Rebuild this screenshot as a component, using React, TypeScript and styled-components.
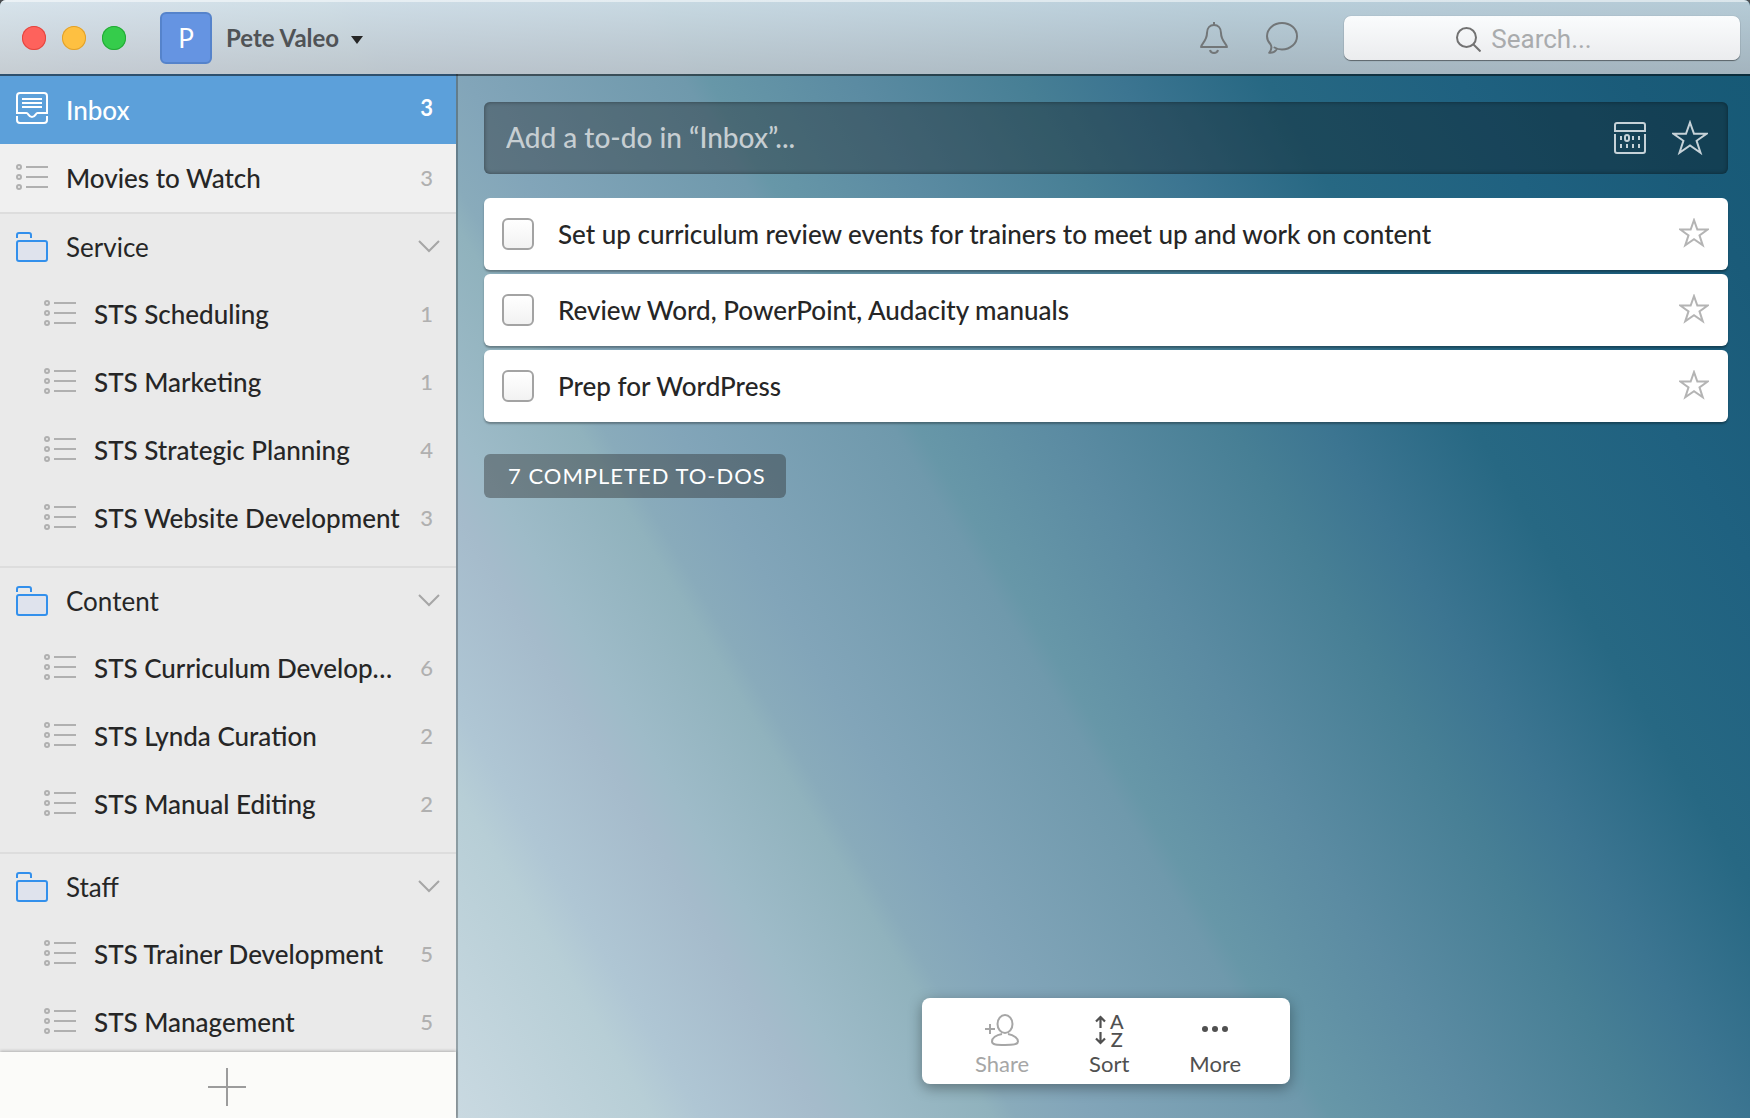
import React from "react";
import styled, { createGlobalStyle } from "styled-components";

const GlobalStyle = createGlobalStyle`
  *, *::before, *::after { box-sizing: border-box; }
  html { background: #4a4d50; }
  body { margin: 0; font-family: Lato, "Open Sans", sans-serif; color: #262626; }
  button, input { font: inherit; color: inherit; }
  button { margin: 0; padding: 0; border: 0; background: none; cursor: pointer; }
  svg { display: block; flex: none; }
  ul { margin: 0; padding: 0; list-style: none; }
`;

const Window = styled.div`
  display: flex;
  flex-direction: column;
  height: 100vh;
  overflow: hidden;
  border-radius: 6px 6px 0 0;
  background: linear-gradient(
    59deg,
    #cddbe3 0%,
    #c9d9e1 19%,
    #b7ced6 27%,
    #afc6d4 29%,
    #a5bbcb 34%,
    #9ebbc8 36%,
    #90b2bd 41%,
    #89abbb 42%,
    #82a5b9 45%,
    #6f99ac 54%,
    #6797a8 55%,
    #5b8ba2 61%,
    #477f95 68%,
    #3c7591 72%,
    #276883 78%,
    #1f6180 86%,
    #1a5b79 93%,
    #155975 100%
  );
`;

const Header = styled.header`
  position: relative;
  z-index: 1;
  flex: none;
  display: flex;
  align-items: center;
  height: 74px;
  padding: 2px 10px 0 22px;
  background: linear-gradient(rgba(225, 235, 242, 0.79), rgba(201, 204, 209, 0.79));
  box-shadow: 0 2px 0 rgba(0, 0, 0, 0.5), inset 0 2px 0 rgba(255, 255, 255, 0.5);
`;

const Lights = styled.div`
  display: flex;
  gap: 16px;
`;

const Light = styled.button<{ $fill: string; $edge: string }>`
  width: 24px;
  height: 24px;
  border-radius: 50%;
  background: ${(p) => p.$fill};
  box-shadow: inset 0 0 0 1px ${(p) => p.$edge};
`;

const Account = styled.button`
  display: flex;
  align-items: center;
  margin-left: 34px;
  font-size: 24px;
  font-weight: 700;
  line-height: 32px;
  color: #505356;
`;

const Avatar = styled.span`
  width: 52px;
  height: 52px;
  margin-right: 14px;
  border: 2px solid #5583cb;
  border-radius: 6px;
  background: #6594e2;
  color: #fff;
  font-size: 26px;
  font-weight: 400;
  line-height: 48px;
  text-align: center;
`;

const Caret = styled.span`
  margin: 4px 0 0 12px;
  border: 6px solid transparent;
  border-top: 8px solid #262626;
  border-bottom: 0;
`;

const HeaderTools = styled.div`
  display: flex;
  gap: 38px;
  margin: 0 46px 0 auto;
  color: #727678;
`;

const SearchBox = styled.label`
  display: flex;
  align-items: center;
  justify-content: center;
  gap: 10px;
  width: 396px;
  height: 44px;
  padding: 2px 36px 0 0;
  border-radius: 7px;
  background: linear-gradient(#fafcfd, #ebecee);
  box-shadow: 0 1px 1px rgba(0, 0, 0, 0.45), 0 0 1px rgba(0, 0, 0, 0.3);
  color: #727272;
`;

const SearchInput = styled.input`
  field-sizing: content;
  padding: 0;
  border: 0;
  outline: 0;
  background: none;
  font-family: Roboto, "Liberation Sans", sans-serif;
  font-size: 26px;
  line-height: 32px;
  &::placeholder { color: #a9abad; opacity: 1; }
`;

const Body = styled.div`
  flex: 1;
  display: flex;
  min-height: 0;
`;

const Sidebar = styled.nav`
  flex: none;
  display: flex;
  flex-direction: column;
  width: 458px;
  border-right: 2px solid rgba(0, 0, 0, 0.25);
  background: #eaeaea;
  background-clip: padding-box;
`;

const Lists = styled.div`
  flex: 1;
  min-height: 0;
  overflow: hidden;
  border-top: 2px solid #5ca0da;
`;

const Group = styled.ul`
  padding-bottom: 14px;
  box-shadow: inset 0 2px 0 #dddddd;
`;

const Row = styled.button<{ $tone?: "active" | "plain"; $nested?: boolean; $light?: boolean }>`
  display: flex;
  align-items: center;
  gap: 18px;
  width: 100%;
  height: 68px;
  padding: 0 23px 0 ${(p) => (p.$nested ? 44 : 16)}px;
  font-size: 26px;
  font-weight: ${(p) => (p.$light ? 400 : 500)};
  line-height: 32px;
  text-align: left;
  color: ${(p) => (p.$tone === "active" ? "#fff" : "#262626")};
  background: ${(p) => (p.$tone === "active" ? "#5ca0da" : p.$tone === "plain" ? "#f0f0f0" : "none")};
`;

const FolderRow = styled(Row)`
  padding-top: 2px;
  padding-right: 16px;
`;

const RowLabel = styled.span`
  flex: 1;
  min-width: 0;
  overflow: hidden;
  text-overflow: ellipsis;
  white-space: nowrap;
`;

const Raised = styled.span`
  padding-bottom: 4px;
`;

const Count = styled.span<{ $active?: boolean }>`
  padding-bottom: ${(p) => (p.$active ? 4 : 0)}px;
  font-size: 22px;
  font-weight: ${(p) => (p.$active ? 700 : 500)};
  color: ${(p) => (p.$active ? "#fff" : "#b0b0b0")};
`;

const AddList = styled.button`
  flex: none;
  display: flex;
  align-items: center;
  justify-content: center;
  height: 66px;
  padding: 4px 2px 0 0;
  background: #fbfbf9;
  box-shadow: 0 -1px 3px rgba(0, 0, 0, 0.25);
  color: #9c9c9c;
`;

const Main = styled.main`
  flex: 1;
  display: flex;
  flex-direction: column;
  min-width: 0;
  padding: 28px 22px 34px 26px;
`;

const AddTask = styled.form`
  display: flex;
  align-items: center;
  height: 72px;
  padding: 0 20px 0 22px;
  margin-bottom: 24px;
  border-radius: 6px;
  background: rgba(10, 10, 10, 0.32);
  box-shadow: inset 0 0 4px rgba(0, 0, 0, 0.4);
  color: #c6d2d8;
`;

const AddInput = styled.input`
  flex: 1;
  min-width: 0;
  padding: 0 0 2px;
  border: 0;
  outline: 0;
  background: none;
  font-size: 28px;
  font-weight: 500;
  line-height: 34px;
  &::placeholder { color: #c6ced2; opacity: 1; }
`;

const IconButton = styled.button`
  margin-left: 26px;
`;

const Tasks = styled.ul`
  display: flex;
  flex-direction: column;
  gap: 4px;
`;

const Task = styled.li`
  display: flex;
  align-items: center;
  height: 72px;
  padding: 0 19px 0 18px;
  border-radius: 6px;
  background: #fff;
  box-shadow: 0 2px 2px rgba(0, 0, 0, 0.3);
  color: #b4b4b4;
`;

const TaskLabel = styled.label`
  flex: 1;
  display: flex;
  align-items: center;
  gap: 24px;
  font-size: 26px;
  font-weight: 500;
  line-height: 32px;
  color: #262626;
`;

const TaskStar = styled.button`
  padding-bottom: 2px;
`;

const Check = styled.input`
  appearance: none;
  width: 32px;
  height: 32px;
  margin: 0;
  border: 2px solid #a3a3a3;
  border-radius: 6px;
  background: linear-gradient(#fff, #f2f2f2);
`;

const Completed = styled.button`
  align-self: flex-start;
  height: 44px;
  margin-top: 32px;
  padding: 0 20px 0 24px;
  border-radius: 6px;
  background: rgba(40, 40, 40, 0.4);
  color: #fff;
  font-size: 22px;
  line-height: 44px;
  letter-spacing: 1px;
  text-transform: uppercase;
`;

const Toolbar = styled.div`
  display: flex;
  justify-content: center;
  gap: 60px;
  align-self: center;
  width: 368px;
  height: 86px;
  margin-top: auto;
  padding: 16px 0 0 4px;
  border-radius: 8px;
  background: #fff;
  box-shadow: 0 4px 14px rgba(0, 0, 0, 0.35);
`;

const Tool = styled.button<{ $muted?: boolean }>`
  display: flex;
  flex-direction: column;
  align-items: center;
  gap: 4px;
  align-self: flex-start;
  font-size: 22px;
  line-height: 28px;
  color: ${(p) => (p.$muted ? "#a6a6a6" : "#505050")};
`;

const SortMark = styled.span`
  display: flex;
  align-items: center;
  gap: 4px;
  height: 32px;
`;

const SortLetters = styled.span`
  display: flex;
  flex-direction: column;
  align-items: center;
  font-size: 20px;
  font-weight: 500;
  line-height: 18px;
`;

const stroke = { fill: "none", stroke: "currentColor", strokeWidth: 2 } as const;

const InboxIcon = () => (
  <svg width="32" height="32" viewBox="0 0 32 32" {...stroke}>
    <path d="M1 21V4a3 3 0 0 1 3-3h24a3 3 0 0 1 3 3v17H21.500c-2 0-2 4-5.500 4s-3.500-4-5.500-4H1z" />
    <path d="M1 24V28a3 3 0 0 0 3 3h24a3 3 0 0 0 3-3v-4M6 7h20M6 11h20M6 15h20" />
  </svg>
);

const ListIcon = () => (
  <svg width="32" height="28" viewBox="0 0 32 28" {...stroke} stroke="#b0b0b0">
    {[3, 13, 23].map((y) => (
      <g key={y}>
        <circle cx="3" cy={y} r="2" />
        <path d={`M10 ${y}h22`} />
      </g>
    ))}
  </svg>
);

const FolderIcon = () => (
  <svg width="32" height="30" viewBox="0 0 32 30" {...stroke} stroke="#3390ec">
    <path d="M1 6V3a2 2 0 0 1 2-2h10a2 2 0 0 1 2 2v3" />
    <rect x="1" y="9" width="30" height="20" rx="2" fill="#dfe3ed" />
  </svg>
);

const ChevronIcon = () => (
  <svg width="22" height="14" viewBox="0 0 22 14" {...stroke} stroke="#a6a6a6">
    <path d="M1 1l10 10L21 1" />
  </svg>
);

const PlusIcon = () => (
  <svg width="38" height="38" viewBox="0 0 38 38" {...stroke}>
    <path d="M19 0v38M0 19h38" />
  </svg>
);

const BellIcon = () => (
  <svg width="28" height="32" viewBox="0 0 28 32" {...stroke}>
    <path d="M1 25c0-3 6-6 6-14 0-5 3-8 7-8s7 3 7 8c0 8 6 11 6 14z" strokeLinejoin="round" />
    <path d="M14 0v3M10 28c1 4 7 4 8 0" />
  </svg>
);

const BubbleIcon = () => (
  <svg width="32" height="32" viewBox="0 0 32 32" {...stroke}>
    <path
      strokeLinejoin="round"
      strokeLinecap="round"
      d="M8.500 25.500C11 27 13.500 27.500 16 27.500 24.500 27.500 31 21.500 31 14.200S24.500 1 16 1 1 7 1 14.200c0 3 1.200 5.600 3.500 8 1.300 2.300.8 6-1.300 8.600 3 .3 5.300-.6 7-2.800"
    />
  </svg>
);

const SearchIcon = () => (
  <svg width="25" height="25" viewBox="0 0 25 25" {...stroke}>
    <circle cx="10.500" cy="10.500" r="9.500" />
    <path d="M17 17l7.500 7.500" />
  </svg>
);

const CalendarIcon = () => (
  <svg width="32" height="32" viewBox="0 0 32 32" {...stroke}>
    <path d="M1 9V3a2 2 0 0 1 2-2h26a2 2 0 0 1 2 2v6z" />
    <path d="M1 12v17a2 2 0 0 0 2 2h26a2 2 0 0 0 2-2V12" />
    <rect x="11" y="13" width="4" height="6" rx="2" />
    <path d="M7 14v4M19 14v4M25 14v4M7 22v4M13 22v4M19 22v4M25 22v4" />
  </svg>
);

const StarIcon = ({ size }: { size: number }) => (
  <svg width={size} height={size} viewBox="0 0 36 36" {...stroke} strokeWidth={size > 32 ? 2 : 2.400}>
    <path d="M18 2.500l4 11.300h12.500l-9.900 7 3.900 12L18 25.500l-10.500 7.300 3.900-12-9.900-7H14z" />
  </svg>
);

const ShareIcon = () => (
  <svg width="34" height="32" viewBox="0 0 34 32" {...stroke}>
    <path d="M5 10v10M0 15h10" />
    <path d="M17 20c-6 1-10 4-10 7.500S12 31 20 31s13-.5 13-3.500-4-6.500-10-7.500" />
    <ellipse cx="20" cy="10" rx="7.500" ry="9" />
  </svg>
);

const SortIcon = () => (
  <SortMark>
    <svg width="11" height="32" viewBox="0 0 11 32" {...stroke} strokeWidth={2.200}>
      <path d="M5.500 14V3M1 7.500L5.500 3 10 7.500M5.500 18v11M1 24.500L5.500 29l4.500-4.500" />
    </svg>
    <SortLetters aria-hidden="true">
      <span>A</span>
      <span>Z</span>
    </SortLetters>
  </SortMark>
);

const MoreIcon = () => (
  <svg width="26" height="32" viewBox="0 0 26 32" fill="currentColor">
    <circle cx="3" cy="15" r="3" />
    <circle cx="13" cy="15" r="3" />
    <circle cx="23" cy="15" r="3" />
  </svg>
);

const groups = [
  {
    name: "Service",
    lists: [
      ["STS Scheduling", 1],
      ["STS Marketing", 1],
      ["STS Strategic Planning", 4],
      ["STS Website Development", 3],
    ],
  },
  {
    name: "Content",
    lists: [
      ["STS Curriculum Development", 6],
      ["STS Lynda Curation", 2],
      ["STS Manual Editing", 2],
    ],
  },
  {
    name: "Staff",
    lists: [
      ["STS Trainer Development", 5],
      ["STS Management", 5],
    ],
  },
] as const;

const tasks = [
  "Set up curriculum review events for trainers to meet up and work on content",
  "Review Word, PowerPoint, Audacity manuals",
  "Prep for WordPress",
];

export default function App() {
  return (
    <Window>
      <GlobalStyle />
      <Header>
        <Lights>
          <Light aria-label="Close" $fill="#fe625c" $edge="#e2463f" />
          <Light aria-label="Minimize" $fill="#fec041" $edge="#e0a02c" />
          <Light aria-label="Zoom" $fill="#35cc4b" $edge="#24a936" />
        </Lights>
        <Account>
          <Avatar>P</Avatar>
          Pete Valeo
          <Caret />
        </Account>
        <HeaderTools>
          <button aria-label="Notifications"><BellIcon /></button>
          <button aria-label="Conversations"><BubbleIcon /></button>
        </HeaderTools>
        <SearchBox>
          <SearchIcon />
          <SearchInput type="text" aria-label="Search" placeholder="Search..." />
        </SearchBox>
      </Header>
      <Body>
        <Sidebar>
          <Lists>
            <Row $tone="active">
              <Raised><InboxIcon /></Raised>
              <RowLabel>Inbox</RowLabel>
              <Count $active>3</Count>
            </Row>
            <Row $tone="plain">
              <ListIcon />
              <RowLabel>Movies to Watch</RowLabel>
              <Count>3</Count>
            </Row>
            {groups.map((group) => (
              <Group key={group.name}>
                <li>
                  <FolderRow $light aria-expanded="true">
                    <FolderIcon />
                    <RowLabel>{group.name}</RowLabel>
                    <ChevronIcon />
                  </FolderRow>
                </li>
                {group.lists.map(([name, count]) => (
                  <li key={name}>
                    <Row $nested>
                      <ListIcon />
                      <RowLabel>{name}</RowLabel>
                      <Count>{count}</Count>
                    </Row>
                  </li>
                ))}
              </Group>
            ))}
          </Lists>
          <AddList aria-label="Create list"><PlusIcon /></AddList>
        </Sidebar>
        <Main>
          <AddTask onSubmit={(e) => e.preventDefault()}>
            <AddInput type="text" aria-label="Add a to-do" placeholder="Add a to-do in “Inbox”..." />
            <IconButton type="button" aria-label="Set due date"><CalendarIcon /></IconButton>
            <IconButton type="button" aria-label="Star"><StarIcon size={36} /></IconButton>
          </AddTask>
          <Tasks>
            {tasks.map((task) => (
              <Task key={task}>
                <TaskLabel>
                  <Check type="checkbox" />
                  {task}
                </TaskLabel>
                <TaskStar aria-label="Star to-do"><StarIcon size={30} /></TaskStar>
              </Task>
            ))}
          </Tasks>
          <Completed>7 completed to-dos</Completed>
          <Toolbar>
            <Tool $muted><ShareIcon />Share</Tool>
            <Tool><SortIcon />Sort</Tool>
            <Tool><MoreIcon />More</Tool>
          </Toolbar>
        </Main>
      </Body>
    </Window>
  );
}
